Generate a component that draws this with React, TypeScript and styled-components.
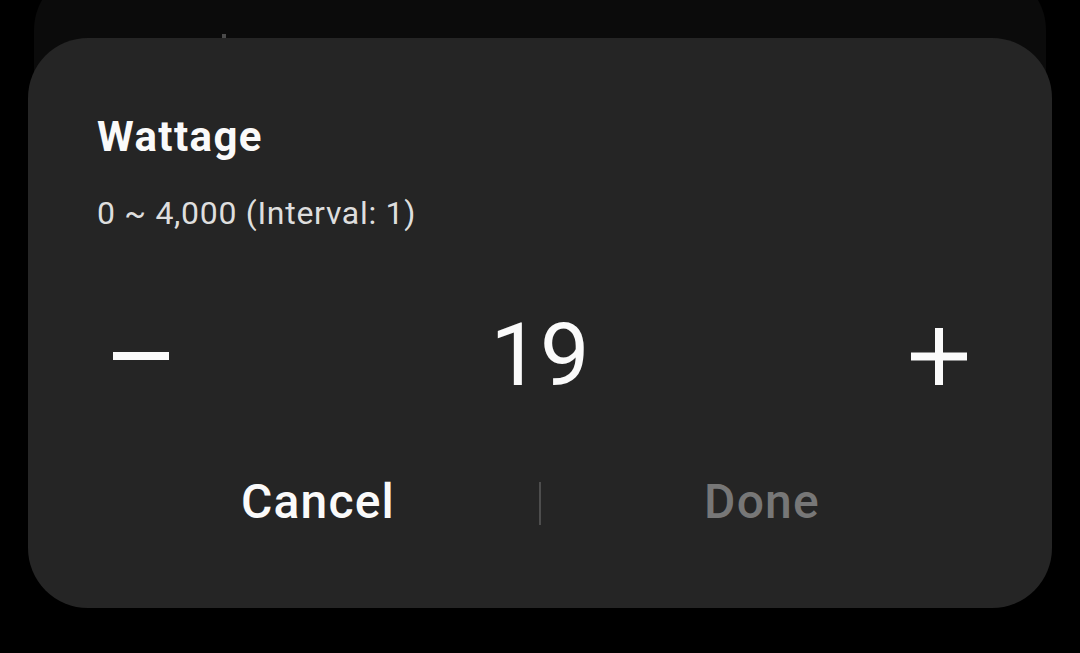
import * as React from 'react';
import styled, { createGlobalStyle } from 'styled-components';

const GlobalStyle = createGlobalStyle`
  html, body {
    margin: 0;
    padding: 0;
    background: #000;
  }
  body {
    font-family: Roboto, 'Noto Sans', 'Liberation Sans', sans-serif;
    overflow: hidden;
  }
`;

const Screen = styled.div`
  position: relative;
  width: 1080px;
  height: 653px;
  background: #000;
  overflow: hidden;
`;

const BackCard = styled.div`
  margin: -30px 34px 0;
  height: 260px;
  border-radius: 60px;
  background: #0b0b0b;
  position: relative;
`;

// top of a letter from the list item behind the dialog
const PeekMark = styled.span`
  position: absolute;
  left: 188px;
  top: 64px;
  width: 4px;
  height: 4px;
  background: #4a4a4a;
`;

const Dialog = styled.div`
  position: absolute;
  top: 38px;
  left: 28px;
  width: 1024px;
  height: 570px;
  box-sizing: border-box;
  padding: 75px 69px 0;
  border-radius: 60px;
  background: #252525;
  display: flex;
  flex-direction: column;
`;

const Title = styled.h2`
  margin: 0;
  font-size: 42px;
  line-height: 48px;
  font-weight: 700;
  letter-spacing: 1.4px;
  color: #fafafa;
`;

const Range = styled.p`
  margin: 33px 0 0;
  font-size: 32px;
  line-height: 38px;
  font-weight: 400;
  letter-spacing: 0.7px;
  color: #dedede;
`;

const Stepper = styled.div`
  margin-top: 80px;
  height: 88px;
  display: flex;
  align-items: center;
  justify-content: space-between;
`;

const StepButton = styled.button`
  width: 88px;
  height: 88px;
  padding: 0;
  border: 0;
  background: none;
  display: flex;
  align-items: center;
  justify-content: center;
  color: #fafafa;
`;

const Value = styled.div`
  font-size: 88px;
  line-height: 88px;
  font-weight: 400;
  color: #fafafa;
  margin-top: -2px;
`;

const Actions = styled.div`
  margin-top: 72px;
  display: flex;
  align-items: center;
`;

const ActionButton = styled.button<{ $disabled?: boolean }>`
  flex: 1;
  padding: 0;
  border: 0;
  background: none;
  font-family: inherit;
  font-size: 48px;
  line-height: 60px;
  font-weight: 500;
  letter-spacing: 1.2px;
  color: ${({ $disabled }) => ($disabled ? '#777777' : '#fafafa')};
`;

const Divider = styled.div`
  width: 2px;
  height: 43px;
  margin-top: 2px;
  background: #4d4d4d;
`;

export default function App() {
  const [value, setValue] = React.useState(19);

  return (
    <Screen>
      <GlobalStyle />
      <BackCard>
        <PeekMark />
      </BackCard>
      <Dialog>
        <Title>Wattage</Title>
        <Range>0 ~ 4,000 (Interval: 1)</Range>
        <Stepper>
          <StepButton aria-label="Decrease" onClick={() => setValue((v) => Math.max(0, v - 1))}>
            <svg width="56" height="56" viewBox="0 0 56 56">
              <rect x="0" y="24" width="56" height="8" fill="currentColor" />
            </svg>
          </StepButton>
          <Value>{value}</Value>
          <StepButton aria-label="Increase" onClick={() => setValue((v) => Math.min(4000, v + 1))}>
            <svg width="56" height="57" viewBox="0 0 56 57">
              <rect x="0" y="24.5" width="56" height="8" fill="currentColor" />
              <rect x="24" y="0" width="8" height="57" fill="currentColor" />
            </svg>
          </StepButton>
        </Stepper>
        <Actions>
          <ActionButton>Cancel</ActionButton>
          <Divider />
          <ActionButton $disabled>Done</ActionButton>
        </Actions>
      </Dialog>
    </Screen>
  );
}
